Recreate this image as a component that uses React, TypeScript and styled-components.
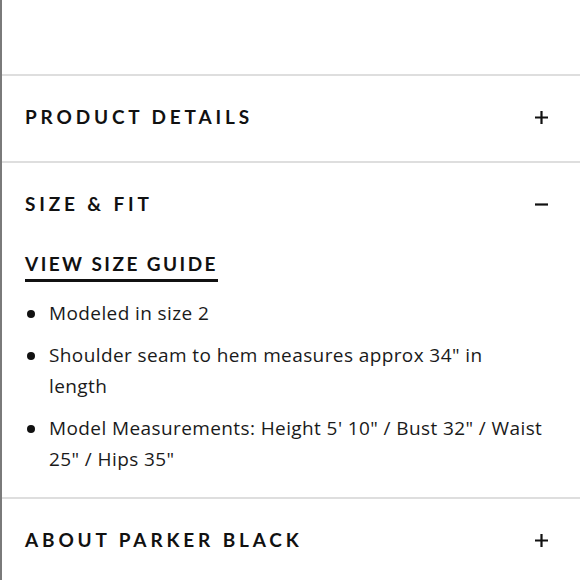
import React from "react";
import styled, { createGlobalStyle } from "styled-components";

const Global = createGlobalStyle`
  html, body { margin: 0; padding: 0; background: #fff; }
  body { font-family: "Open Sans", sans-serif; color: #111; }
`;

const Page = styled.div`
  width: 580px;
  height: 580px;
  box-sizing: border-box;
  border-left: 2px solid #7a7a7a;
  overflow: hidden;
  display: flex;
  flex-direction: column;
`;

const TopSpace = styled.div`
  height: 74px;
  flex: none;
`;

const Section = styled.section`
  border-top: 2px solid #dedede;
  flex: none;
`;

const Header = styled.div`
  height: 85px;
  box-sizing: border-box;
  padding: 0 32px 3px 23px;
  display: flex;
  align-items: center;
  justify-content: space-between;
`;

const Title = styled.h2`
  margin: 0;
  font-family: "Lato", sans-serif;
  font-weight: 700;
  font-size: 19px;
  line-height: 22px;
  letter-spacing: 3.85px;
  color: #111;
`;

const Icon = styled.svg`
  width: 13px;
  height: 13px;
  display: block;
`;

const Body = styled.div`
  padding: 5px 36px 22px 23px;
`;

const GuideLink = styled.a`
  display: inline-block;
  font-family: "Lato", sans-serif;
  font-weight: 700;
  font-size: 19px;
  letter-spacing: 2.45px;
  color: #111;
  text-decoration: none;
  border-bottom: 3px solid #111;
  line-height: 22px;
  padding-bottom: 4px;
`;

const List = styled.ul`
  list-style: none;
  margin: 16px 0 0;
  padding: 0;
  display: flex;
  flex-direction: column;
  gap: 11px;
`;

const Item = styled.li`
  position: relative;
  padding-left: 24px;
  font-size: 19px;
  letter-spacing: 0.4px;
  line-height: 31px;
  color: #1a1a1a;
  &::before {
    content: "";
    position: absolute;
    left: 2px;
    top: 12px;
    width: 8px;
    height: 8px;
    border-radius: 50%;
    background: #111;
  }
`;

const Plus = () => (
  <Icon viewBox="0 0 13 13">
    <path d="M6.5 0v13M0 6.5h13" stroke="#111" strokeWidth="2.2" />
  </Icon>
);

const Minus = () => (
  <Icon viewBox="0 0 13 13">
    <path d="M0 6.5h13" stroke="#111" strokeWidth="2.2" />
  </Icon>
);

export default function App() {
  return (
    <>
      <Global />
      <Page>
        <TopSpace />
        <Section>
          <Header>
            <Title>PRODUCT DETAILS</Title>
            <Plus />
          </Header>
        </Section>
        <Section>
          <Header>
            <Title>SIZE &amp; FIT</Title>
            <Minus />
          </Header>
          <Body>
            <GuideLink href="#">VIEW SIZE GUIDE</GuideLink>
            <List>
              <Item>Modeled in size 2</Item>
              <Item>Shoulder seam to hem measures approx 34" in length</Item>
              <Item>Model Measurements: Height 5' 10" / Bust 32" / Waist 25" / Hips 35"</Item>
            </List>
          </Body>
        </Section>
        <Section>
          <Header>
            <Title>ABOUT PARKER BLACK</Title>
            <Plus />
          </Header>
        </Section>
      </Page>
    </>
  );
}
